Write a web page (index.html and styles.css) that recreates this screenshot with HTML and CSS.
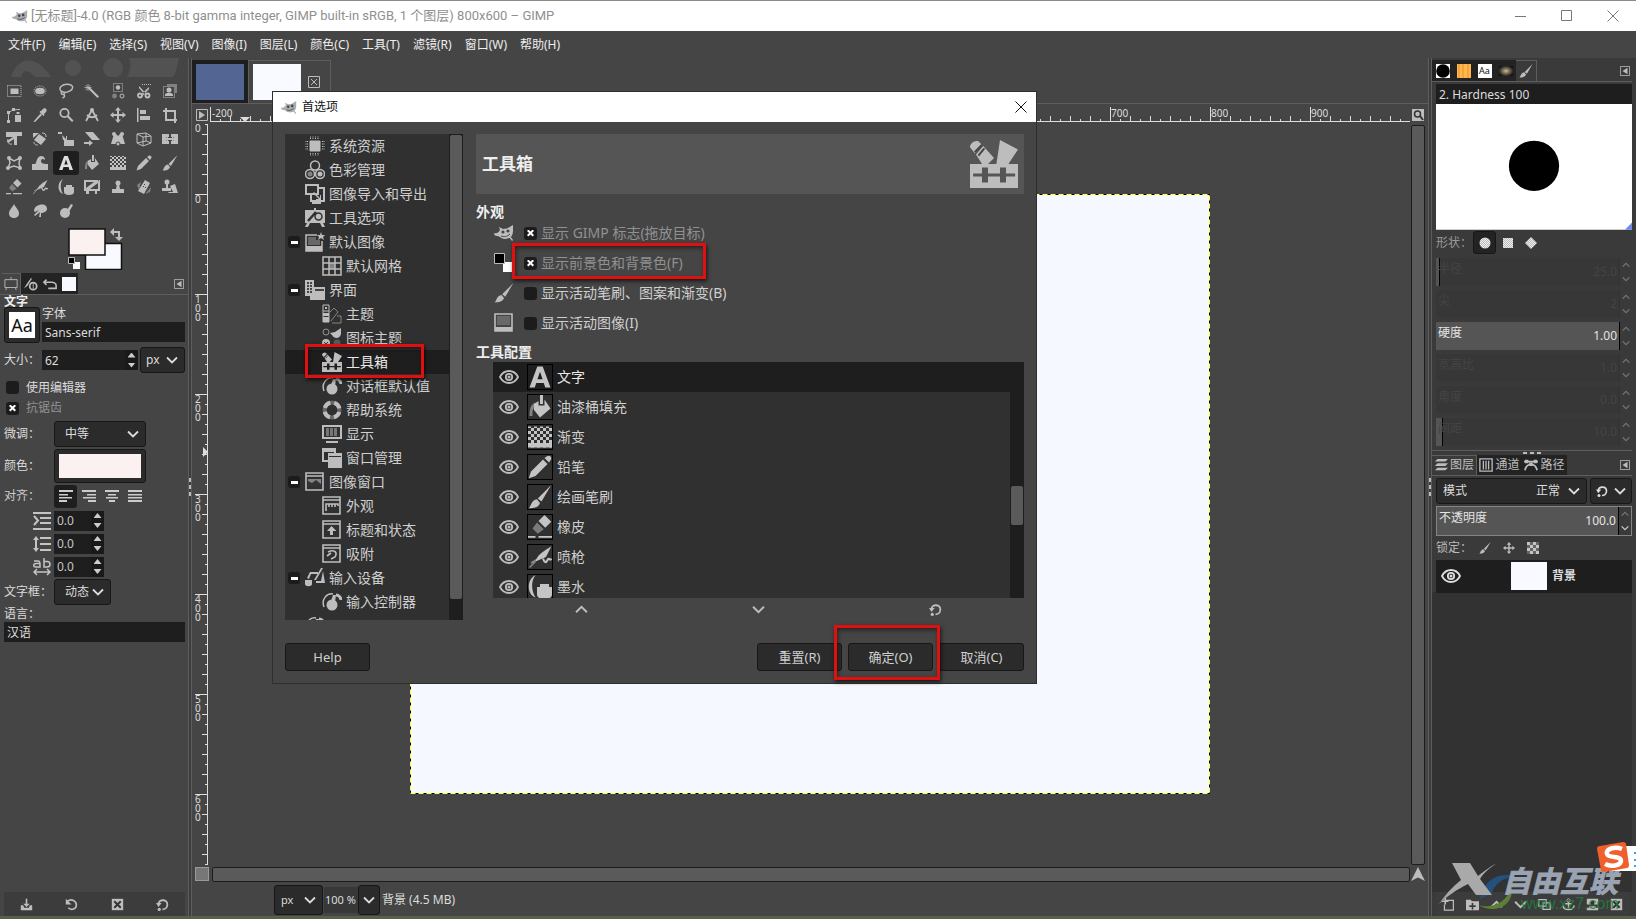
FILE: index.html
```html
<!DOCTYPE html>
<html lang="zh-CN">
<head>
<meta charset="utf-8">
<title>[无标题]-4.0 – GIMP</title>
<link rel="stylesheet" href="styles.css">
</head>
<body>
<svg class="defs" aria-hidden="true">
  <defs>
    <pattern id="check" width="4" height="4" patternUnits="userSpaceOnUse"><path d="M0 0h2v2H0zM2 2h2v2H2z" fill="#c4c4c4"/></pattern>
    <pattern id="fine" width="2" height="2" patternUnits="userSpaceOnUse"><path d="M0 0h2v2H0z" fill="#bbb"/><path d="M0 0h1v1H0zM1 1h1v1H1z" fill="#eee"/></pattern>
    <pattern id="hmid" x="0" width="20" height="16" patternUnits="userSpaceOnUse"><path d="M0 9h1v6H0zM10 12h1v3h-1z" fill="#ddd"/></pattern>
    <pattern id="hbig" x="0" width="100" height="16" patternUnits="userSpaceOnUse"><path d="M0 0h1v15H0z" fill="#ddd"/></pattern>
    <pattern id="vmid" y="12" width="16" height="20" patternUnits="userSpaceOnUse"><path d="M8 0h6v1H8zM11 10h3v1h-3z" fill="#ddd"/></pattern>
    <pattern id="vbig" y="72" width="16" height="100" patternUnits="userSpaceOnUse"><path d="M1 0h13v1H1z" fill="#ddd"/></pattern>
  </defs>
  <symbol id="rectsel" viewBox="0 0 16 16"><path d="M4.500 5.500h8v5.500h-8z"/><rect x="1.500" y="2.500" width="13.500" height="11" fill="none" stroke="currentColor" stroke-dasharray="1 1"/></symbol>
  <symbol id="ellsel" viewBox="0 0 16 16"><ellipse cx="8" cy="8" rx="4.800" ry="3.300"/><ellipse cx="8" cy="8" rx="6" ry="5" fill="none" stroke="currentColor" stroke-dasharray="1 1"/></symbol>
  <symbol id="lasso" viewBox="0 0 16 16"><path class="s" d="M4.500 9C2 8 1 5.500 3 3.500C6 .5 13 .5 14.500 3.500C15.500 7 10 9.500 5.500 9.500M5 8.500a2 1.500 0 1 0 .5 3c2-1 1-2.500-.5-2.500M6 11.500c1 1.500.5 3-1.500 3.500" stroke-width="1.400"/></symbol>
  <symbol id="wand" viewBox="0 0 16 16"><path d="M5.500 4l9.500 9.500-1.500 1.500L4 5.500z"/><path class="s" d="M4 1v7M.5 4.500h7M1.500 2l5 5M6.500 2l-5 5" stroke-width=".8"/></symbol>
  <symbol id="bycolor" viewBox="0 0 16 16"><rect x="3.500" y=".5" width="9" height="8" fill="none" stroke="currentColor" stroke-dasharray="1 1"/><circle cx="8" cy="4.500" r="2.200"/><circle cx="4.500" cy="13" r="2.400" opacity=".5"/><circle class="s" cx="12" cy="13" r="2"/></symbol>
  <symbol id="scissors" viewBox="0 0 16 16"><path d="M3 3l7.500 8-1.500 1L3 5zM13 4l-7.500 7 1.500 1.500L13 6z"/><circle class="s" cx="4" cy="12.500" r="2" stroke-width="1.800"/><circle class="s" cx="11.500" cy="12.500" r="2" stroke-width="1.800"/><path d="M6 1.500h9" stroke="currentColor" stroke-dasharray="1 1"/></symbol>
  <symbol id="fgsel" viewBox="0 0 16 16"><path d="M5 1h10v9h-2V3H5z" opacity=".5"/><rect x="1.500" y="3.500" width="11" height="11" fill="none" stroke="currentColor" stroke-dasharray="1 1"/><circle cx="7" cy="7" r="2.500"/><path d="M3 12c0-3 8-3 8 0v1H3z"/></symbol>
  <symbol id="paths" viewBox="0 0 16 16"><path class="s" d="M2.500 14V8C3 4 6 2.500 14 2.500"/><path d="M1 13h3v3H1zM1 4h3v3H1zM6 1h3v3H6zM9 8h6v7H9zM10.500 5h3v2h-3z"/></symbol>
  <symbol id="picker" viewBox="0 0 16 16"><path d="M9 4l2-2c2-2 5 1 3 3l-2 2 .5 1-1 1L7.500 5l1-1zM8.500 6.500L10 8l-7 7-1.500-.5z"/></symbol>
  <symbol id="zoom" viewBox="0 0 16 16"><circle class="s" cx="6.500" cy="6" r="4.200" stroke-width="1.800"/><path d="M9 10l1.500-1.500 5 5-1.500 1.500z"/></symbol>
  <symbol id="measure" viewBox="0 0 16 16"><path class="s" d="M8 3L2 14M8 3l6 11M3 8c3 3 7 3 10 0" stroke-width="1.800"/><circle cx="8" cy="3" r="2"/></symbol>
  <symbol id="move" viewBox="0 0 16 16"><path d="M8 0l3 3.500H9V7h3.500V5L16 8l-3.500 3V9H9v3.500h2L8 16l-3-3.500h2V9H3.500v2L0 8l3.500-3v2H7V3.500H5z"/></symbol>
  <symbol id="align" viewBox="0 0 16 16"><path d="M1 1h1.500v14H1zM4 3h6v4H4zM4 9h10v4H4z"/></symbol>
  <symbol id="crop" viewBox="0 0 16 16"><path d="M3 1h2v2h9v9h-2V5H5v7h10v2H3V5H1V3h2zM12 13h2v3h-2z"/></symbol>
  <symbol id="transform" viewBox="0 0 16 16"><path d="M0 1h16v4h-5v9H8V8L2 12 1 10l6-4H0z"/><path d="M2 8c-1 3 1 6 4 5" class="s"/></symbol>
  <symbol id="rotate" viewBox="0 0 16 16"><path d="M7 3l7 5-5 6-7-5zM1 2h6L1 7z"/><path class="s" d="M10 2c3 0 4 1 4 4M2 11c0 3 2 3 4 3"/></symbol>
  <symbol id="scale" viewBox="0 0 16 16"><path d="M6 9h10v6H6zM0 1h4v2H0zM4 4l4 4V5h1v4H5z"/></symbol>
  <symbol id="shear" viewBox="0 0 16 16"><path d="M1 1h8l7 8H8zM0 11h5V9l4 3-4 3v-2H0z"/></symbol>
  <symbol id="handle" viewBox="0 0 16 16"><path d="M1 13L4 3h2l2 2 2-2h2l3 10z"/><circle cx="4" cy="3" r="2"/><circle cx="12" cy="3" r="2"/><circle cx="8" cy="13" r="2" stroke="#454545"/></symbol>
  <symbol id="cube" viewBox="0 0 16 16"><path class="s" d="M1 3l9-1 5 3-8 1zM1 3v9l6 3V6M7 15l8-3V5M1 12l9-2V2M10 10l5 2"/></symbol>
  <symbol id="flip" viewBox="0 0 16 16"><path d="M0 3h7v3H4v4h3v3H0zM9 3h7v10H9v-3h3V6H9z"/><path d="M3 8l3-3v2h4V5l3 3-3 3V9H6v2z"/></symbol>
  <symbol id="cage" viewBox="0 0 16 16"><path class="s" d="M3 3l5 3 6-3-1 5 1 5-6-2-6 2 2-5z" stroke-width="1.500"/><circle cx="3" cy="3" r="2"/><circle cx="14" cy="3" r="2"/><circle cx="14" cy="13" r="2"/><circle cx="2" cy="13" r="2"/></symbol>
  <symbol id="warp" viewBox="0 0 16 16"><path d="M0 15V9h3c2-1 1-7 6-8 3 0 4 2 4 4-2-2-4-1-4 1 0 3 4 3 7 3v6z"/></symbol>
  <symbol id="text" viewBox="0 0 16 16"><path fill-rule="evenodd" d="M6.200 1h3.600L15 15h-3.500l-1-3h-5l-1 3H1zM8 4.500L6.300 9.500h3.400z"/></symbol>
  <symbol id="bucket" viewBox="0 0 16 16"><path d="M4 6l3-2v3h4V3l4 6-7 6-4-5z"/><path d="M8 0h2v6H8z"/><path d="M5 5C2 6 1 9 1 14h2c0-3 0-5 2-6z" opacity=".55"/></symbol>
  <symbol id="gradient" viewBox="0 0 16 16"><path d="M0 1h16v14H0z" fill="url(#check)"/><path d="M0 12h16v3H0z"/></symbol>
  <symbol id="pencil" viewBox="0 0 16 16"><path d="M12.500 1c2-1.500 4 1 2.500 2.500L14 5l-3-3zM10 3l3 3-8 8-4.500 1.500L2 11z"/></symbol>
  <symbol id="brush" viewBox="0 0 16 16"><path d="M15.500 0L9 11 6.500 9zM6 9.500L8 12c-1 3-4 3.500-7.500 3.500 1.500-1 1.500-5.500 5.500-6z"/></symbol>
  <symbol id="eraser" viewBox="0 0 16 16"><path d="M7 4l4-4 4.500 4.500-4 4z"/><path d="M3 9l3-4 4.500 4.500-4 3z" opacity=".5"/><path d="M0 14h5v1.200H0zM7 14h9v1.200H7z"/></symbol>
  <symbol id="airbrush" viewBox="0 0 16 16"><path d="M15.500 1L12 8l-7 3c1-4 5-7 10.500-10z"/><path class="s" d="M10 9c1 3 2 3 3 1s2 1 2.500-1" stroke-width="1.400"/><path class="s" d="M5 11l-4 4M7 9l-5 3" opacity=".6"/></symbol>
  <symbol id="ink" viewBox="0 0 16 16"><path d="M5 0C2 4 2 10 5 15c-6-2-6-12 0-15z"/><path d="M8 6h6v2h2v5c0 2-2 3-5 3s-5-1-5-3V8h2z"/></symbol>
  <symbol id="mypaint" viewBox="0 0 16 16"><path fill-rule="evenodd" d="M0 1h14v2l1-2h1v11h-3v3h-2v-3H5v3H2v-3H0zM2 9l8-6H2zM6 10h8V4z"/></symbol>
  <symbol id="stamp" viewBox="0 0 16 16"><circle cx="8" cy="4" r="2.500"/><path d="M7 5h2l1 5h4v4H2v-4h4z"/></symbol>
  <symbol id="heal" viewBox="0 0 16 16"><path d="M9 1l5 3-6 11-6-3z"/><path d="M1 6l4-3-2 8zM15 8l-1 5-5 2z" opacity=".5"/><path d="M7 7h1v1H7zM9 8h1v1H9zM8 5h1v1H8z" fill="#454545"/></symbol>
  <symbol id="pclone" viewBox="0 0 16 16"><circle cx="5" cy="3" r="2.500"/><path d="M4 4h2v5h3v3H0V9h4zM8 7l5-2 3 9H6l1-1h4z"/></symbol>
  <symbol id="drop" viewBox="0 0 16 16"><path d="M8 1c2 4 5 6 5 9.500 0 6-10 6-10 0C3 7 6 5 8 1z"/></symbol>
  <symbol id="smudge" viewBox="0 0 16 16"><path d="M2 8c0-6 9-8 12-5 3 4-1 7-5 7v4H7l1-5-5 4-1-1 5-5-4 2z"/></symbol>
  <symbol id="dodge" viewBox="0 0 16 16"><circle cx="7" cy="10" r="5"/><path d="M9 7l4-6 2 1-4 7z"/></symbol>
  <symbol id="wilber" viewBox="0 0 20 16"><path d="M0 8c3 1 5-1 6-3L5 2l4 2 4-.5L19 0v6c0 5-3 8-8 8-4 0-5-3-8-3-2 0-3-1-3-3z"/><path d="M15 12l3 4 1-1-3-4z"/><circle cx="9" cy="7" r="1.600" fill="#454545"/><circle cx="14" cy="6" r="1.600" fill="#454545"/><path d="M7 11c3 1 6 1 9-2" fill="none" stroke="#454545"/></symbol>
  <symbol id="easel" viewBox="0 0 16 16"><path class="s" d="M1 3h14v9H1zM8 0v3M3 12l-1 3M13 12l1 3"/></symbol>
  <symbol id="device" viewBox="0 0 16 16"><path d="M8 1L3 8l-3 5 4-3 5-8z"/><circle class="s" cx="10.500" cy="10.500" r="4" stroke-width="2"/><path d="M10 7h1v7h-1z"/></symbol>
  <symbol id="undo" viewBox="0 0 16 16"><path class="s" d="M4 3L1 6l3 3M1 6h9c5 0 5 4 5 4v3H6" stroke-width="1.800"/></symbol>
  <symbol id="collapse" viewBox="0 0 12 12"><path class="s" d="M.5.5h11v11H.5z"/><path d="M9 2v8L3 6z"/></symbol>
  <symbol id="closex" viewBox="0 0 12 12"><path class="s" d="M.5.5h11v11H.5zM3 3l6 6M9 3L3 9"/></symbol>
  <symbol id="down" viewBox="0 0 12 12"><path class="s" d="M1 3.500L6 8.500l5-5" stroke-width="1.800"/></symbol>
  <symbol id="up" viewBox="0 0 12 12"><path class="s" d="M1 8.500L6 3.500l5 5" stroke-width="1.800"/></symbol>
  <symbol id="al" viewBox="0 0 14 12"><path d="M0 0h14v2H0zM0 4h9v1.600H0zM0 7h13v1.600H0zM0 10h8v2H0z"/></symbol>
  <symbol id="ar" viewBox="0 0 14 12"><path d="M0 0h14v2H0zM5 4h9v1.600H5zM1 7h13v1.600H1zM6 10h8v2H6z"/></symbol>
  <symbol id="ac" viewBox="0 0 14 12"><path d="M0 0h14v2H0zM3 4h8v1.600H3zM1 7h12v1.600H1zM4 10h6v2H4z"/></symbol>
  <symbol id="aj" viewBox="0 0 14 12"><path d="M0 0h14v2H0zM0 4h14v1.600H0zM0 7h14v1.600H0zM0 10h14v2H0z"/></symbol>
  <symbol id="indent" viewBox="0 0 18 18"><path d="M0 0h18v2H0zM7 5h11v2H7zM7 10h11v2H7zM0 16h18v2H0z"/><path class="s" d="M1 4l4 4.500L1 13" stroke-width="2"/></symbol>
  <symbol id="linesp" viewBox="0 0 18 18"><path d="M7 2h11v2H7zM7 8h11v2H7zM7 14h11v2H7zM3 1l3 4H4v8h2l-3 4-3-4h2V5H0z"/></symbol>
  <symbol id="letsp" viewBox="0 0 18 18"><path class="s" d="M1 3h4c2 0 2 1 2 6H3C0 9 0 5.500 3 5.500h4M11 0v9h3c4 0 4-5.500 0-5.500h-3M4 11l-3 3 3 3M14 11l3 3-3 3M1 14h16" stroke-width="1.500"/></symbol>
  <symbol id="save" viewBox="0 0 16 16"><path d="M7 1h2v6h3l-4 4-4-4h3zM1 9h3l1 3h6l1-3h3v6H1z"/></symbol>
  <symbol id="revert" viewBox="0 0 16 16"><path class="s" d="M3 4c5-4 11 0 11 4.500S8 16 4 12" stroke-width="2"/><path d="M1 1v7h7z"/></symbol>
  <symbol id="delete" viewBox="0 0 16 16"><path d="M1 1h14v14H1z"/><path d="M4 4l8 8M12 4l-8 8" stroke="#333" stroke-width="2.500"/></symbol>
  <symbol id="reset" viewBox="0 0 16 16"><path class="s" d="M3 8C3 1 14 1 14 8c0 4-3 6-6 6" stroke-width="2.200"/><path d="M0 6h7l-4 5z"/><circle cx="4" cy="14" r="2"/></symbol>
  <symbol id="layers" viewBox="0 0 16 16"><path d="M4 1h12l-3 3H1zM4 6h12l-3 3H1zM4 11h12l-3 3H1z"/></symbol>
  <symbol id="channels" viewBox="0 0 16 16"><path class="s" d="M1 1h14v14H1zM5 3v10M8 3v10M11 3v10" stroke-width="1.500"/></symbol>
  <symbol id="pathtab" viewBox="0 0 16 16"><path class="s" d="M0 4h16M1 14c2-9 12-9 14 0" stroke-width="2"/><path d="M1 2h4v4H1zM11 2h4v4h-4zM6 5h4v4H6z"/></symbol>
  <symbol id="eye" viewBox="0 0 20 16"><path class="s" d="M1 8c4-8 14-8 18 0-4 8-14 8-18 0z" stroke-width="1.800"/><circle class="s" cx="10" cy="8" r="3.200" stroke-width="1.800"/><circle cx="10" cy="8" r="1.500"/></symbol>
  <symbol id="newdoc" viewBox="0 0 16 16"><path class="s" d="M5 3h9v12H3V8" stroke-width="1.500"/><path d="M3 0v3H0v2h3v3h2V5h3V3H5V0z"/></symbol>
  <symbol id="group" viewBox="0 0 16 16"><path fill-rule="evenodd" d="M0 2h6l1 2h9v11H0zM7 6v3H4v2h3v3h2v-3h3V9H9V6z"/></symbol>
  <symbol id="dup" viewBox="0 0 16 16"><path class="s" d="M1 2h9v8H1zM6 6h9v8H6z" stroke-width="1.500"/></symbol>
  <symbol id="anchor" viewBox="0 0 16 16"><path class="s" d="M8 5v10M4 7h8M1 9c1 7 13 7 14 0" stroke-width="1.700"/><circle class="s" cx="8" cy="3" r="2"/></symbol>
  <symbol id="mask" viewBox="0 0 16 16"><path d="M1 1h14v7H1zM4 10h8v2h3v3H1v-3h3z"/><circle cx="8" cy="6" r="2.500" fill="#333"/></symbol>
  <symbol id="chip" viewBox="0 0 20 20"><rect x="4.500" y="4.500" width="11" height="11" rx="1"/><path d="M5 1h10M5 2.500h10M5 17.500h10M5 19h10M1 5v10M2.500 5v10M17.500 5v10M19 5v10" stroke="currentColor" stroke-dasharray="1 1.500"/></symbol>
  <symbol id="color3" viewBox="0 0 20 20"><g class="s" stroke-width="1.500"><circle cx="10" cy="5.500" r="4.500"/><circle cx="5" cy="14" r="4.500"/><circle cx="15" cy="14" r="4.500"/></g><circle cx="5" cy="14" r="2.500" opacity=".6"/><circle cx="15" cy="14" r="2.500"/></symbol>
  <symbol id="io" viewBox="0 0 20 20"><path class="s" d="M1 1h12v9H1zM6 10v7h13V4h-6M7 19h9" stroke-width="2"/><path d="M9 8l6 6v-3h1v5h-5v-1h3L8 9z"/></symbol>
  <symbol id="toolopt" viewBox="0 0 20 20"><path d="M0 2h20v13h-2l2 4h-3l-2-4H5l-2 4H0l2-4H0z"/><path d="M9 0h2v2H9z"/><path d="M3 13L11 4" stroke="#303030" stroke-width="2.500"/><circle cx="13.500" cy="8.500" r="3.500" fill="none" stroke="#303030" stroke-width="1.500"/></symbol>
  <symbol id="defimg" viewBox="0 0 20 20"><path class="s" d="M12 3H1v16h16V9" stroke-width="1.500"/><path d="M1 14h16v5H1zM16 0l1 3h3l-2 2 1 3-3-2-3 2 1-3-2-2h3z"/><path d="M3 5h8v3h4v5H3z" opacity=".4"/></symbol>
  <symbol id="grid" viewBox="0 0 20 20"><path class="s" d="M1 1h18v18H1zM7 1v18M13 1v18M1 7h18M1 13h18" stroke-width="1.500"/><path d="M7 7h6v6H7z" opacity=".6"/></symbol>
  <symbol id="iface" viewBox="0 0 20 20"><path d="M5 7h15v13H5z"/><path d="M0 0h9v16H0z"/><path d="M2 2h2v2H2zM5 2h2v2H5zM2 5h2v2H2zM5 5h2v2H5zM2 8h2v2H2zM5 8h2v2H5zM2 11h2v2H2zM5 11h2v2H5zM10 9h9v2h-9z" fill="#444"/></symbol>
  <symbol id="theme" viewBox="0 0 20 20"><path class="s" d="M1 1h6v17H1zM1 7h6"/><path class="s" d="M8 8l4-4 4 4-7 9M10 19h9v-7h-4" opacity=".6"/><path d="M3 3h2v2H3zM1 9h6v3H1zM1 13h6v5H1z"/></symbol>
  <symbol id="icontheme" viewBox="0 0 20 20"><circle class="s" cx="4" cy="4" r="3" opacity=".7"/><path d="M8 5l5-1 6-4v6c-1 5-7 5-9 1z"/><circle cx="4" cy="15" r="4"/><path d="M2 14l2 2 2-2" stroke="#333" fill="none"/><circle cx="15" cy="15" r="3.500" opacity=".3"/></symbol>
  <symbol id="toolbox" viewBox="0 0 20 20"><path fill-rule="evenodd" d="M0 10h20v10H0zM1.300 14v1.200H5v2.500h2.500v-2.500h5v2.500H15v-2.500h3.800V14H15v-2.500h-2.500V14h-5v-2.500H5V14z"/><path d="M12.500 0l7.500 4-4 6h-5zM0 3C0 1 3-.5 4 1l1 1-3 3.500zM5.500 2.500L10 7.500 7.500 10H5L2.500 6z"/><path d="M2 5l3-3M3.500 6.500l2.500-3" stroke="#444" stroke-width=".8"/></symbol>
  <symbol id="knob" viewBox="0 0 20 20"><circle cx="10" cy="13" r="5.500"/><path d="M9 9l2-6h3l-1 7z"/><path class="s" d="M2 15C-1 7 5 1 11 2" stroke-width="1.500"/><path class="s" d="M14 3c3 0 5 3 5 5" stroke-width="3"/></symbol>
  <symbol id="ring" viewBox="0 0 20 20"><circle class="s" cx="10" cy="10" r="7.500" stroke-width="4" stroke-opacity=".4"/><circle class="s" cx="10" cy="10" r="7.500" stroke-width="4" stroke-dasharray="7.800 4" stroke-dashoffset="-2"/></symbol>
  <symbol id="display" viewBox="0 0 20 20"><path class="s" d="M1 2h18v12H1zM4 18h12" stroke-width="2"/><path d="M4 4h3v8H4zM8 4h3v8H8zM12 4h3v8h-3z" opacity=".5"/></symbol>
  <symbol id="winman" viewBox="0 0 20 20"><path fill-rule="evenodd" d="M0 0h14v5h6v15H6v-6H0zM2 4v8h4V5h6V4zM7 8v1h12V8z"/></symbol>
  <symbol id="imgwin" viewBox="0 0 20 20"><path class="s" d="M1 1h17v17H1zM1 4h17" stroke-width="1.600"/><path d="M3 7h13v7H3z" opacity=".6"/><path d="M3 9l4 2 4-3 5 4v3H3z" fill="#333"/></symbol>
  <symbol id="winrule" viewBox="0 0 20 20"><path class="s" d="M1 1h17v17H1zM1 4h17M4 15V8h12v2M7 8v3M10 8v3M13 8v3" stroke-width="1.600"/></symbol>
  <symbol id="winup" viewBox="0 0 20 20"><path class="s" d="M1 1h17v17H1zM1 4h17" stroke-width="1.600"/><path d="M9.500 6l5 5H11v4H8v-4H5z"/></symbol>
  <symbol id="winsnap" viewBox="0 0 20 20"><path class="s" d="M1 1h17v17H1zM1 4h17M6 8c6-3 10 0 7 5l-4 2M5 12l4-3" stroke-width="1.600"/></symbol>
  <symbol id="input" viewBox="0 0 20 20"><path d="M0 12h7v4c0 3-7 3-7 0zM2 10l3-6h8v2H6l-2 5zM16 0h2l-7 12H9zM18 3l2 12h-9v-2h5z"/></symbol>
  <symbol id="actimg" viewBox="0 0 20 20"><path class="s" d="M1 1h17v17H1z" stroke-width="1.600"/><path d="M1 14h17v4H1z"/><path d="M3 3h13v9H3z" opacity=".3"/></symbol>
</svg>

<header class="titlebar">
  <svg class="wil"><use href="#wilber"/></svg>
  <h1>[无标题]-4.0 (RGB 颜色 8-bit gamma integer, GIMP built-in sRGB, 1 个图层) 800x600 – GIMP</h1>
  <div class="winbtns">
    <button aria-label="最小化"><svg viewBox="0 0 12 12"><path class="s" d="M0 6.500h11"/></svg></button>
    <button aria-label="最大化"><svg viewBox="0 0 12 12"><path class="s" d="M.5.5h10v10H.5z"/></svg></button>
    <button aria-label="关闭"><svg viewBox="0 0 12 12"><path class="s" d="M.5.5l11 11M11.500.5L.5 11.500"/></svg></button>
  </div>
</header>
<nav class="menubar">
  <button>文件(F)</button><button>编辑(E)</button><button>选择(S)</button><button>视图(V)</button><button>图像(I)</button><button>图层(L)</button><button>颜色(C)</button><button>工具(T)</button><button>滤镜(R)</button><button>窗口(W)</button><button>帮助(H)</button>
</nav>

<main class="work">
  <aside class="left">
    <svg class="band" viewBox="0 0 176 19" aria-hidden="true"><path d="M8 19C14-2 34-4 48 19H32c-6-8-12-8-14 0zM126 0h50c-2 10-3 14-6 19h-46c4-8 4-12 2-19z"/><circle cx="70" cy="10" r="8"/><circle cx="110" cy="10" r="10"/></svg>
    <div class="tools">
      <button aria-label="矩形选择"><svg><use href="#rectsel"/></svg></button><button aria-label="椭圆选择"><svg><use href="#ellsel"/></svg></button><button aria-label="自由选择"><svg><use href="#lasso"/></svg></button><button aria-label="模糊选择"><svg><use href="#wand"/></svg></button><button aria-label="按颜色选择"><svg><use href="#bycolor"/></svg></button><button aria-label="剪刀选择"><svg><use href="#scissors"/></svg></button><button aria-label="前景选择"><svg><use href="#fgsel"/></svg></button>
      <button aria-label="路径"><svg><use href="#paths"/></svg></button><button aria-label="颜色拾取"><svg><use href="#picker"/></svg></button><button aria-label="缩放"><svg><use href="#zoom"/></svg></button><button aria-label="测量"><svg><use href="#measure"/></svg></button><button aria-label="移动"><svg><use href="#move"/></svg></button><button aria-label="对齐"><svg><use href="#align"/></svg></button><button aria-label="剪裁"><svg><use href="#crop"/></svg></button>
      <button aria-label="统一变换"><svg><use href="#transform"/></svg></button><button aria-label="旋转"><svg><use href="#rotate"/></svg></button><button aria-label="缩放变换"><svg><use href="#scale"/></svg></button><button aria-label="切变"><svg><use href="#shear"/></svg></button><button aria-label="控制柄变换"><svg><use href="#handle"/></svg></button><button aria-label="透视"><svg><use href="#cube"/></svg></button><button aria-label="翻转"><svg><use href="#flip"/></svg></button>
      <button aria-label="笼状变换"><svg><use href="#cage"/></svg></button><button aria-label="弯曲变换"><svg><use href="#warp"/></svg></button><button class="on" aria-label="文字"><svg><use href="#text"/></svg></button><button aria-label="油漆桶填充"><svg><use href="#bucket"/></svg></button><button aria-label="渐变"><svg><use href="#gradient"/></svg></button><button aria-label="铅笔"><svg><use href="#pencil"/></svg></button><button aria-label="绘画笔刷"><svg><use href="#brush"/></svg></button>
      <button aria-label="橡皮"><svg><use href="#eraser"/></svg></button><button aria-label="喷枪"><svg><use href="#airbrush"/></svg></button><button aria-label="墨水"><svg><use href="#ink"/></svg></button><button aria-label="MyPaint"><svg><use href="#mypaint"/></svg></button><button aria-label="克隆"><svg><use href="#stamp"/></svg></button><button aria-label="修复"><svg><use href="#heal"/></svg></button><button aria-label="透视克隆"><svg><use href="#pclone"/></svg></button>
      <button aria-label="模糊/锐化"><svg><use href="#drop"/></svg></button><button aria-label="涂抹"><svg><use href="#smudge"/></svg></button><button aria-label="减淡/加深"><svg><use href="#dodge"/></svg></button>
    </div>
    <div class="swatches">
      <svg viewBox="0 0 56 42" width="56" height="42" role="img" aria-label="前景色和背景色"><path d="M17.500 15.500h36v26h-36z" fill="#f8faff" stroke="#111" stroke-width="1.500"/><path d="M1 1h36v26H1z" fill="#fbf1f1" stroke="#111" stroke-width="1.500"/><path d="M5 34h7v7H5z" fill="#fff"/><path d="M.5 29.500h6v6h-6z" fill="#000" stroke="#bbb"/><g fill="#bdbdbd"><path d="M42 4l4-4v3h6v6h3l-4 4-4-4h3V5h-4v3z"/></g></svg>
    </div>
    <div class="dtabs">
      <button class="on" aria-label="工具选项"><svg><use href="#easel"/></svg></button><button aria-label="设备状态"><svg><use href="#device"/></svg></button><button aria-label="撤消历史"><svg><use href="#undo"/></svg></button><button aria-label="图像"><i class="whitebox"></i></button>
      <button class="coll" aria-label="配置此标签页"><svg><use href="#collapse"/></svg></button>
    </div>
    <section class="opts">
      <h2>文字</h2>
      <div class="fontrow">
        <button class="aa" aria-label="选择字体"><span>Aa</span></button>
        <div class="fontcol"><label for="font">字体</label><input id="font" value="Sans-serif"></div>
      </div>
      <div class="row sizerow"><label for="size">大小：</label><span class="spin"><input id="size" value="62"><span class="arrows"><button aria-label="增加"></button><button aria-label="减少"></button></span></span>
        <span class="sel"><select aria-label="单位"><option>px</option></select><svg><use href="#down"/></svg></span></div>
      <label class="chk"><input type="checkbox">使用编辑器</label>
      <label class="chk dim"><input type="checkbox" checked>抗锯齿</label>
      <div class="row hintrow"><label for="hint">微调：</label><span class="sel w92"><select id="hint"><option>中等</option></select><svg><use href="#down"/></svg></span></div>
      <div class="row colrow"><span class="lab">颜色：</span><button class="colorbtn" aria-label="颜色"><i></i></button></div>
      <div class="row alrow"><span class="lab">对齐：</span><button class="on" aria-label="左对齐"><svg><use href="#al"/></svg></button><button aria-label="右对齐"><svg><use href="#ar"/></svg></button><button aria-label="居中"><svg><use href="#ac"/></svg></button><button aria-label="两端对齐"><svg><use href="#aj"/></svg></button></div>
      <div class="row sprow"><svg><use href="#indent"/></svg><span class="spin"><input aria-label="缩进" value="0.0"><span class="arrows"><button aria-label="增加"></button><button aria-label="减少"></button></span></span></div>
      <div class="row sprow"><svg><use href="#linesp"/></svg><span class="spin"><input aria-label="行距" value="0.0"><span class="arrows"><button aria-label="增加"></button><button aria-label="减少"></button></span></span></div>
      <div class="row sprow"><svg><use href="#letsp"/></svg><span class="spin"><input aria-label="字距" value="0.0"><span class="arrows"><button aria-label="增加"></button><button aria-label="减少"></button></span></span></div>
      <div class="row boxrow"><label for="box">文字框：</label><span class="sel w57"><select id="box"><option>动态</option></select><svg><use href="#down"/></svg></span></div>
      <label class="langlab" for="lang">语言：</label>
      <input id="lang" value="汉语">
    </section>
    <div class="foot">
      <button aria-label="保存"><svg><use href="#save"/></svg></button><button aria-label="恢复"><svg><use href="#revert"/></svg></button><button aria-label="删除"><svg><use href="#delete"/></svg></button><button aria-label="重置"><svg><use href="#reset"/></svg></button>
    </div>
  </aside>
  <div class="gutter"><i></i></div>

  <section class="center">
    <div class="imgtabs">
      <button class="it" aria-label="图像 1"><i class="blue"></i></button>
      <div class="it on"><i></i><button aria-label="关闭图像"><svg><use href="#closex"/></svg></button></div>
    </div>
    <div class="view">
      <button class="corner" aria-label="图像菜单"><svg viewBox="0 0 12 12"><path class="s" d="M.5.5h11v11H.5z"/><path d="M3 2v8l6-4z"/></svg></button>
      <svg class="hr"><rect width="100%" height="16" fill="url(#hmid)"/><rect width="100%" height="16" fill="url(#hbig)"/><path d="M0 14.500h3000" stroke="#ddd"/><path d="M30 10h10l-5 5z" fill="#ddd"/>
        <text x="2" y="10">-200</text><text x="901" y="10">700</text><text x="1001" y="10">800</text><text x="1101" y="10">900</text></svg>
      <button class="corner" aria-label="缩放窗口"><svg viewBox="0 0 12 12"><path d="M0 0h12v12H0z"/><circle cx="5.500" cy="5" r="3" fill="none" stroke="#333" stroke-width="1.500"/><path d="M8 7l3 4" stroke="#333" stroke-width="2"/></svg></button>
      <svg class="vr"><rect width="16" height="100%" fill="url(#vmid)"/><rect width="16" height="100%" fill="url(#vbig)"/><path d="M13.500 2v3000" stroke="#ddd"/><path d="M9 325v10l5-5z" fill="#ddd"/>
        <text x="1" y="10">0</text><text x="1" y="81">0</text>
        <text y="181"><tspan x="1">1</tspan><tspan x="1" dy="9">0</tspan><tspan x="1" dy="9">0</tspan></text>
        <text y="281"><tspan x="1">2</tspan><tspan x="1" dy="9">0</tspan><tspan x="1" dy="9">0</tspan></text>
        <text y="381"><tspan x="1">3</tspan><tspan x="1" dy="9">0</tspan><tspan x="1" dy="9">0</tspan></text>
        <text y="481"><tspan x="1">4</tspan><tspan x="1" dy="9">0</tspan><tspan x="1" dy="9">0</tspan></text>
        <text y="581"><tspan x="1">5</tspan><tspan x="1" dy="9">0</tspan><tspan x="1" dy="9">0</tspan></text>
        <text y="681"><tspan x="1">6</tspan><tspan x="1" dy="9">0</tspan><tspan x="1" dy="9">0</tspan></text></svg>
      <div class="canvas"><svg class="sheet" viewBox="0 0 800 600"><path d="M.5.5h799v599H.5z" fill="#f5f8ff" stroke="#000"/><path d="M.5.5h799v599H.5z" fill="none" stroke="#ffff60" stroke-width="1.500" stroke-dasharray="5 3"/></svg></div>
      <div class="vbar"></div>
      <button class="corner qm" aria-label="快速蒙版"></button>
      <div class="hbar"></div>
      <button class="corner nav" aria-label="导航"><svg viewBox="0 0 12 12"><path d="M6 0l6 12-6-3-6 3z"/></svg></button>
    </div>
    <footer class="status">
      <span class="sel unit"><select aria-label="单位"><option>px</option></select><svg><use href="#down"/></svg></span><input class="zoomv" aria-label="缩放比例" value="100 %"><button class="zoomb" aria-label="缩放列表"><svg><use href="#down"/></svg></button><span>背景 (4.5 MB)</span>
    </footer>
  </section>
  <div class="gutter g2"><i></i></div>

  <aside class="right">
    <div class="dtabs">
      <button aria-label="笔刷"><svg viewBox="0 0 14 14"><path d="M0 0h14v14H0z" fill="#fff"/><circle cx="7" cy="7" r="6.800" fill="#000"/></svg></button><button aria-label="图案"><svg viewBox="0 0 14 14"><path d="M0 0h14v14H0z" fill="#ffb84d"/><path d="M2 0v14M6 0v14M11 0v14" stroke="#e58f26"/></svg></button><button aria-label="字体"><span class="miniaa">Aa</span></button><button aria-label="渐变"><i class="glow"></i></button><button class="on" aria-label="笔刷编辑器"><svg><use href="#brush"/></svg></button>
      <button class="coll" aria-label="配置此标签页"><svg><use href="#collapse"/></svg></button>
    </div>
    <section class="brushed">
      <input class="bname" aria-label="笔刷名称" value="2. Hardness 100">
      <svg class="preview" viewBox="0 0 195 125" role="img" aria-label="笔刷预览"><path d="M0 0h195v125H0z" fill="#fff"/><circle cx="97.500" cy="61.500" r="25" fill="#000"/><path d="M195 118v7h-7z" fill="#6b8ae6"/></svg>
      <div class="shape"><span>形状：</span><button class="on" aria-label="圆形"><svg viewBox="0 0 12 12"><circle cx="6" cy="6" r="5.500" fill="url(#fine)"/></svg></button><button aria-label="方形"><svg viewBox="0 0 12 12"><path d="M1 1h10v10H1z" fill="url(#fine)"/></svg></button><button aria-label="菱形"><svg viewBox="0 0 12 12"><path d="M6 0l6 6-6 6-6-6z" fill="url(#fine)"/></svg></button></div>
      <div class="slider off k3"><div><span>半径</span><b>25.0</b></div><span class="ud"><button aria-label="增加"><svg><use href="#up"/></svg></button><button aria-label="减少"><svg><use href="#down"/></svg></button></span></div>
      <div class="slider off"><div><span>尖</span><b>2</b></div><span class="ud"><button aria-label="增加"><svg><use href="#up"/></svg></button><button aria-label="减少"><svg><use href="#down"/></svg></button></span></div>
      <div class="slider full"><div><span>硬度</span><b>1.00</b></div><span class="ud"><button aria-label="增加"><svg><use href="#up"/></svg></button><button aria-label="减少"><svg><use href="#down"/></svg></button></span></div>
      <div class="slider off"><div><span>宽高比</span><b>1.0</b></div><span class="ud"><button aria-label="增加"><svg><use href="#up"/></svg></button><button aria-label="减少"><svg><use href="#down"/></svg></button></span></div>
      <div class="slider off"><div><span>角度</span><b>0.0</b></div><span class="ud"><button aria-label="增加"><svg><use href="#up"/></svg></button><button aria-label="减少"><svg><use href="#down"/></svg></button></span></div>
      <div class="slider off k6"><div><span>间距</span><b>10.0</b></div><span class="ud"><button aria-label="增加"><svg><use href="#up"/></svg></button><button aria-label="减少"><svg><use href="#down"/></svg></button></span></div>
    </section>
    <div class="hsplit"><i></i></div>
    <div class="dtabs lt">
      <button class="on"><svg><use href="#layers"/></svg>图层</button><button><svg><use href="#channels"/></svg>通道</button><button><svg><use href="#pathtab"/></svg>路径</button>
      <button class="coll" aria-label="配置此标签页"><svg><use href="#collapse"/></svg></button>
    </div>
    <section class="layers">
      <div class="moderow"><label class="mode">模式<span class="sel bare"><select><option>正常</option></select><svg><use href="#down"/></svg></span></label><button class="mode2" aria-label="切换模式组"><svg><use href="#reset"/></svg><svg><use href="#down"/></svg></button></div>
      <div class="slider full opac"><div><span>不透明度</span><b>100.0</b></div><span class="ud"><button aria-label="增加"><svg><use href="#up"/></svg></button><button class="lit" aria-label="减少"><svg><use href="#down"/></svg></button></span></div>
      <div class="lock"><span>锁定：</span><button aria-label="锁定像素"><svg><use href="#brush"/></svg></button><button aria-label="锁定位置"><svg><use href="#move"/></svg></button><button aria-label="锁定透明"><svg viewBox="0 0 12 12"><path d="M0 0h12v12H0z" fill="#666"/><path d="M0 0h3v3H0zM6 0h3v3H6zM3 3h3v3H3zM9 3h3v3H9zM0 6h3v3H0zM6 6h3v3H6zM3 9h3v3H3zM9 9h3v3H9z" fill="#c4c4c4"/></svg></button></div>
      <div class="layer"><button aria-label="可见"><svg><use href="#eye"/></svg></button><i></i><strong>背景</strong></div>
    </section>
    <div class="foot">
      <button aria-label="新建图层"><svg><use href="#newdoc"/></svg></button><button aria-label="新建图层组"><svg><use href="#group"/></svg></button><button aria-label="上移"><svg><use href="#up"/></svg></button><button aria-label="下移"><svg><use href="#down"/></svg></button><button aria-label="复制"><svg><use href="#dup"/></svg></button><button aria-label="固定"><svg><use href="#anchor"/></svg></button><button aria-label="蒙版"><svg><use href="#mask"/></svg></button><button aria-label="删除图层"><svg><use href="#delete"/></svg></button>
    </div>
  </aside>
</main>

<section class="dialog" role="dialog" aria-labelledby="dt">
  <header><svg class="wil"><use href="#wilber"/></svg><h2 id="dt">首选项</h2><button aria-label="关闭"><svg viewBox="0 0 12 12"><path class="s" d="M.5.5l11 11M11.500.5L.5 11.500"/></svg></button></header>
  <div class="dbody">
    <div class="tree">
      <ul>
        <li><svg><use href="#chip"/></svg>系统资源</li>
        <li><svg><use href="#color3"/></svg>色彩管理</li>
        <li><svg><use href="#io"/></svg>图像导入和导出</li>
        <li><svg><use href="#toolopt"/></svg>工具选项</li>
        <li class="open"><button aria-label="折叠"></button><svg><use href="#defimg"/></svg>默认图像</li>
        <li class="sub"><svg><use href="#grid"/></svg>默认网格</li>
        <li class="open"><button aria-label="折叠"></button><svg><use href="#iface"/></svg>界面</li>
        <li class="sub"><svg><use href="#theme"/></svg>主题</li>
        <li class="sub"><svg><use href="#icontheme"/></svg>图标主题</li>
        <li class="sub on"><svg><use href="#toolbox"/></svg>工具箱<i class="mark m1"></i></li>
        <li class="sub"><svg><use href="#knob"/></svg>对话框默认值</li>
        <li class="sub"><svg><use href="#ring"/></svg>帮助系统</li>
        <li class="sub"><svg><use href="#display"/></svg>显示</li>
        <li class="sub"><svg><use href="#winman"/></svg>窗口管理</li>
        <li class="open"><button aria-label="折叠"></button><svg><use href="#imgwin"/></svg>图像窗口</li>
        <li class="sub"><svg><use href="#winrule"/></svg>外观</li>
        <li class="sub"><svg><use href="#winup"/></svg>标题和状态</li>
        <li class="sub"><svg><use href="#winsnap"/></svg>吸附</li>
        <li class="open"><button aria-label="折叠"></button><svg><use href="#input"/></svg>输入设备</li>
        <li class="sub"><svg><use href="#knob"/></svg>输入控制器</li>
        <li><svg><use href="#knob"/></svg></li>
      </ul>
      <div class="sb"><i></i></div>
    </div>
    <div class="page">
      <div class="banner"><h3>工具箱</h3><svg><use href="#toolbox"/></svg></div>
      <h4>外观</h4>
      <div class="prow"><svg><use href="#wilber"/></svg><label class="dim"><input type="checkbox" checked>显示 GIMP 标志(拖放目标)</label></div>
      <div class="prow"><svg viewBox="0 0 20 20"><path d="M9 9h10v10H9z" fill="#fff"/><path d="M.5.500h10v10h-10z" fill="#000" stroke="#bbb"/></svg><label class="dim"><input type="checkbox" checked>显示前景色和背景色(F)</label><i class="mark m2"></i></div>
      <div class="prow"><svg><use href="#brush"/></svg><label><input type="checkbox">显示活动笔刷、图案和渐变(B)</label></div>
      <div class="prow"><svg><use href="#actimg"/></svg><label><input type="checkbox">显示活动图像(I)</label></div>
      <h4 class="h2nd">工具配置</h4>
      <div class="tlist">
        <ul>
          <li class="on"><button aria-label="可见"><svg><use href="#eye"/></svg></button><span><svg><use href="#text"/></svg></span>文字</li>
          <li><button aria-label="可见"><svg><use href="#eye"/></svg></button><span><svg><use href="#bucket"/></svg></span>油漆桶填充</li>
          <li><button aria-label="可见"><svg><use href="#eye"/></svg></button><span><svg><use href="#gradient"/></svg></span>渐变</li>
          <li><button aria-label="可见"><svg><use href="#eye"/></svg></button><span><svg><use href="#pencil"/></svg></span>铅笔</li>
          <li><button aria-label="可见"><svg><use href="#eye"/></svg></button><span><svg><use href="#brush"/></svg></span>绘画笔刷</li>
          <li><button aria-label="可见"><svg><use href="#eye"/></svg></button><span><svg><use href="#eraser"/></svg></span>橡皮</li>
          <li><button aria-label="可见"><svg><use href="#eye"/></svg></button><span><svg><use href="#airbrush"/></svg></span>喷枪</li>
          <li><button aria-label="可见"><svg><use href="#eye"/></svg></button><span><svg><use href="#ink"/></svg></span>墨水</li>
        </ul>
        <div class="sb"><i></i></div>
      </div>
      <div class="order"><button aria-label="上移"><svg><use href="#up"/></svg></button><button aria-label="下移"><svg><use href="#down"/></svg></button><button aria-label="重置"><svg><use href="#reset"/></svg></button></div>
    </div>
  </div>
  <footer><button>Help</button><span></span><button>重置(R)</button><div class="okwrap"><button>确定(O)</button><i class="mark m3"></i></div><button>取消(C)</button></footer>
</section>

<div class="wm" aria-hidden="true">
  <svg class="wmx" viewBox="0 0 90 50"><path d="M44 38c4-20 20-28 36-22-14 0-22 8-24 16z" fill="#24507c"/><path d="M42 44c14 4 28-2 34-18 2 18-16 28-34 18z" fill="#5c7f35"/><path d="M16 2h18l8 13C50 9 55 5 61 2c-8 5-14 11-17 16l12 16H40L32 23C20 29 10 36 3 43c6-9 13-17 22-24z" fill="#a9a9aa"/></svg>
  <span class="wmt">自由互联</span>
  <span class="wmu">www.xz7.com</span>
</div>
<svg class="sogou" viewBox="0 0 40 34" aria-hidden="true"><path d="M20 5h20v25H12z" fill="#fff"/><path d="M4 5l23-4c2 0 3 1 3 2l3 21c0 2-1 3-2 3L8 31c-2 0-3-1-3-2L1 8c0-2 1-3 3-3z" fill="#f0602c"/><path d="M26 8C19 5 9 8 11 13s14 1 14 7c-1 5-10 6-16 3" fill="none" stroke="#fff" stroke-width="4.500"/><path d="M38 12h2M38 19h2M38 25h2" stroke="#3aa0e8" stroke-width="2"/></svg>
</body>
</html>
```

FILE: styles.css
```css
*{box-sizing:border-box}
html,body{height:100%}
body{margin:0;display:flex;flex-direction:column;overflow:hidden;position:relative;background:#454545;color:#dcdcdc;font:12px/16px "Noto Sans","Noto Sans CJK SC",sans-serif}
button,input,select{font:inherit;color:inherit;border:0;margin:0;padding:0;background:none;border-radius:0;appearance:none;outline:0;min-width:0}
button{display:flex;align-items:center;justify-content:center}
h1,h2,h3,h4,ul{margin:0;padding:0;font-size:inherit;list-style:none}
svg{display:block;flex:none;fill:currentColor}
svg .s,.s{fill:none;stroke:currentColor}
i{display:block;font-style:normal}
.defs{position:absolute;width:0;height:0}

.titlebar{height:31px;flex:none;background:#fff;border-top:1px solid #8a8a8a;color:#8f8f8f;display:flex;align-items:center;padding-left:12px}
.titlebar h1{font:400 13px/18px Roboto,"Noto Sans CJK SC",sans-serif;margin-left:3px;flex:1;white-space:nowrap}
.wil{width:16px;height:13px;color:#a9adb0}
.winbtns{display:flex}
.winbtns button{width:46px;height:28px;color:#777}
.winbtns svg{width:12px;height:12px}
.menubar{height:27px;flex:none;display:flex;align-items:center;gap:13px;padding-left:8px;color:#eee}

.work{flex:1;min-height:0;display:grid;grid-template-columns:188px 4px minmax(0,1fr) 4px 204px;border-bottom:3px solid #566149}
.left,.right,.center{display:flex;flex-direction:column;min-height:0;min-width:0}
.gutter{border:solid #5e5e5e;border-width:0 1px;background:#3c3c3c;display:flex;align-items:center;justify-content:center}
.gutter i{width:2px;height:18px;background:repeating-linear-gradient(#bbb 0 4px,transparent 4px 7px)}

.band{width:176px;height:19px;margin:0 0 2px 3px;fill:#525252}
.tools{display:grid;grid-template-columns:repeat(7,26px);grid-auto-rows:24px;padding-left:1px;color:#bdbdbd}
.tools svg{width:16px;height:16px}
.tools .on{background:#1e1e1e;border-radius:3px;color:#ddd}
.swatches{height:50px;padding:5px 0 0 68px}
.dtabs{height:22px;flex:none;display:flex;border-bottom:1px solid #5e5e5e;padding-left:2px;color:#bdbdbd}
.dtabs button{width:19px;background:#232323}
.dtabs .on{background:none;border:solid #5e5e5e;border-width:1px 1px 0 0}
.dtabs svg{width:14px;height:14px}
.dtabs button.coll{width:14px;margin-left:auto;background:none;margin-right:2px}
.dtabs .coll svg{width:10px;height:10px}
.whitebox{width:14px;height:14px;background:#f8faff}
.opts{flex:1;padding:0 3px 0 4px;display:flex;flex-direction:column}
.opts h2{height:12px;line-height:14px;font-weight:700;color:#eee}
.fontrow{display:flex;gap:2px}
.aa{width:36px;height:36px;background:#2b2b2b;border:1px solid #171717;border-radius:3px}
.aa span{width:26px;height:26px;background:#fff;color:#111;font:18px/26px "Noto Sans",sans-serif;text-align:center}
.fontcol{flex:1;display:flex;flex-direction:column}
.fontcol label{height:15px;line-height:13px}
.opts input:not([type]){background:#1e1e1e;height:20px;padding:0 3px;width:100%}
.row{display:flex;align-items:center}
.row>label,.row>.lab{width:50px;white-space:nowrap}
.spin{display:flex;flex:1;min-width:0}
.arrows{width:13px;flex:none;background:#191919;display:grid;grid-template-rows:1fr 1fr;justify-items:center;align-items:center}
.arrows button{width:8px;height:5px;background:#ccc;clip-path:polygon(50% 0,100% 100%,0 100%)}
.arrows button+button{clip-path:polygon(0 0,100% 0,50% 100%)}
.sizerow{height:34px;gap:2px}
.row.sizerow>label{width:36px}
.sel{display:grid;align-items:center;height:26px;background:#2b2b2b;border:1px solid #171717;border-radius:3px;width:45px}
.sel select,.sel svg{grid-area:1/1}
.sel select{padding-left:5px;width:100%;height:100%}
.sel svg{width:12px;height:12px;justify-self:end;margin-right:6px;pointer-events:none}
.w92{width:92px}.w57{width:57px}
.w92 select,.w57 select{padding-left:10px}
.chk{display:flex;align-items:center;height:21px;gap:7px;padding-left:2px}
.chk+.chk{height:20px}
input[type=checkbox]{width:13px;height:13px;background:#1c1c1c;border-radius:3px;flex:none;display:grid;place-items:center}
input[type=checkbox]:checked::before{content:"";width:7px;height:7px;background:#fff;clip-path:polygon(0 20%,20% 0,50% 30%,80% 0,100% 20%,70% 50%,100% 80%,80% 100%,50% 70%,20% 100%,0 80%,30% 50%)}
.dim{color:#919191}
.hintrow{height:30px;padding-top:1px}
.colrow{height:35px}
.colorbtn{width:92px;height:34px;background:#2b2b2b;border:1px solid #171717;border-radius:3px}
.colorbtn i{width:82px;height:24px;background:#fbf1f1}
.alrow{height:26px;color:#ccc}
.alrow button{width:23px;height:23px}
.alrow .on{background:#1e1e1e;border-radius:3px}
.alrow svg{width:14px;height:12px}
.sprow{height:23px;padding-left:29px;gap:3px;color:#c4c4c4}
.sprow svg{width:18px;height:18px}
.sprow .spin{flex:none;width:50px}
.boxrow{height:27px}
.langlab{height:17px;line-height:17px}
.foot{height:24px;flex:none;margin:0 3px 0 4px;background:#3c3c3c;display:grid;grid-auto-flow:column;grid-auto-columns:1fr;color:#bdbdbd}
.foot svg{width:13px;height:13px}

.imgtabs{height:46px;flex:none;display:flex;align-items:flex-start;padding-top:2px;border-bottom:1px solid #5e5e5e}
.it{height:43px;width:56px;background:#1e1e1e;padding:4px}
.it i{width:48px;height:36px;background:#f8faff}
.it .blue{background:#536592}
.it.on{width:83px;background:none;border:1px solid #5e5e5e;border-bottom:0;display:flex;gap:7px;align-items:center}
.it svg{width:12px;height:12px;color:#bbb}
.view{flex:1;min-height:0;display:grid;grid-template-columns:16px minmax(0,1fr) 16px;grid-template-rows:15px minmax(0,1fr) 18px;padding:3px 2px 0 2px}
.corner svg{width:12px;height:12px;color:#bdbdbd}
.qm::before{content:"";width:12px;height:12px;background:#777;border:1px solid #999}
.nav svg{height:14px;width:14px}
.hr{width:100%;height:16px;overflow:hidden}
.vr{width:16px;height:100%;overflow:hidden}
.hr text,.vr text{font-size:10px;fill:#ddd}
.canvas{position:relative;overflow:hidden}
.sheet{position:absolute;left:200px;top:72px;width:800px;height:600px}
.vbar,.hbar{background:#5a5a5a;border:1px solid #1c1c1c;border-radius:2px}
.vbar{margin:3px 1px 0}
.hbar{margin:2px 0 1px 2px}
.status{height:33px;flex:none;display:flex;align-items:center;padding-left:82px}
.status .unit{width:49px;height:30px;font-size:11px}
.status .unit select{padding-left:6px}
.zoomv{width:34px;height:26px;background:#383838;margin-left:1px;padding-left:1px;font-size:11px}
.zoomb{width:22px;height:30px;background:#2b2b2b;border:1px solid #171717;border-radius:3px}
.zoomb svg{width:12px;height:12px}
.status>span:last-child{margin-left:2px}

.right{background:#3a3a3a;padding-right:4px}
.right>.dtabs{margin-top:2px;padding-left:0}
.right>.dtabs button{width:21px}
.right>.dtabs button.coll{width:14px;margin-right:0}
.miniaa{width:14px;height:14px;background:#fff;color:#111;font-size:9px;line-height:14px}
.glow{width:14px;height:10px;background:radial-gradient(#cdb98c,#111 80%)}
.brushed{padding:2px 0 0 4px;border-bottom:1px solid #5e5e5e}
.bname{width:100%;height:20px;background:#1e1e1e;padding-left:3px;display:block}
.preview{width:100%;height:auto}
.shape{display:flex;align-items:center;height:26px;color:#999}
.shape span{width:37px}
.shape button{width:23px;height:23px}
.shape .on{background:#232323;border:1px solid #171717;border-radius:3px}
.shape svg{width:12px;height:12px}
.slider{display:flex;height:28px;margin:2px 0 4px}
.slider>div{flex:1;display:flex;justify-content:space-between;align-items:center;padding:0 2px;background:#373737;border-right:1px solid #333}
.slider b{font-weight:400}
.slider>div span{line-height:22px;align-self:flex-start}
.slider.off{color:#444}
.slider.k3>div{background:linear-gradient(90deg,#555 3px,#000 3px 4px,#373737 4px)}
.slider.k6>div{background:linear-gradient(90deg,#555 6px,#000 6px 7px,#373737 7px)}
.slider.full{color:#e4e4e4}
.slider.full>div{background:#555;border-right:1px solid #000}
.ud{width:12px;display:grid;justify-items:center;color:#777}
.ud svg{width:8px;height:8px}
.ud .lit{color:#ccc}
.hsplit{height:4px;display:flex;justify-content:center;align-items:center;flex:none}
.hsplit i{width:18px;height:2px;background:repeating-linear-gradient(90deg,#bbb 0 4px,transparent 4px 7px)}
.right>.lt{margin-top:0;height:21px}
.right>.lt button{width:45px;gap:2px;white-space:nowrap}
.layers{flex:1;padding:2px 0 0 4px;background:linear-gradient(#3a3a3a 116px,#323232 116px)}
.moderow{display:flex;gap:3px}
.mode{flex:1;height:26px;background:#2b2b2b;border:1px solid #171717;border-radius:3px;display:flex;align-items:center;justify-content:space-between;padding-left:6px}
.bare{border:0;background:none;height:24px;width:50px}
.bare select{padding:0}
.mode2{width:42px;background:#2b2b2b;border:1px solid #171717;border-radius:3px;gap:6px}
.mode2 svg{width:12px;height:12px}
.opac{margin:2px 0 0;height:30px;border:1px solid #858585}
.lock{display:flex;align-items:center;height:24px;color:#bbb}
.lock span{width:37px}
.lock button{width:24px}
.lock svg{width:12px;height:12px}
.layer{display:flex;align-items:center;height:33px;background:#1e1e1e;color:#ddd}
.layer svg{width:20px;height:16px}
.layer button{width:30px}
.layer i{width:36px;height:28px;background:#f8faff;margin:0 5px 0 45px}

.dialog{position:absolute;left:272px;top:91px;width:765px;background:#454545;border:1px solid #2e2e2e;font-size:14px;line-height:20px;color:#cfcfcf}
.dialog>header{height:30px;background:#fff;color:#111;display:flex;align-items:center;padding-left:8px;font-size:12px}
.dialog header h2{font-weight:400;flex:1;margin-left:5px}
.dialog header button{width:31px;height:30px}
.dialog header svg:not(.wil){width:12px;height:12px}
.dbody{display:flex;gap:13px;padding:12px}
.tree{display:flex;height:486px;width:178px;flex:none}
.tree ul{flex:1;background:#303030;overflow:hidden;min-width:0}
.tree li{height:24px;display:flex;align-items:center;gap:4px;padding-left:20px;position:relative;white-space:nowrap}
.tree li svg{width:20px;height:20px;color:#bdbdbd}
.tree .sub{padding-left:37px}
.tree .open{padding-left:3px}
.tree .open button{width:12px;height:12px;background:#1c1c1c;border-radius:3px;margin-right:1px}
.tree .open button::before{content:"";width:7px;height:3px;background:#fff}
.tree .on,.tlist .on{background:#1e1e1e;color:#e8e8e8}
.sb{width:14px;flex:none;background:#1e1e1e;padding:1px}
.sb i{height:464px;background:#5a5a5a;border-radius:2px}
.page{flex:1;min-width:0}
.banner{height:60px;background:#555;display:flex;align-items:center;justify-content:space-between;padding:0 6px}
.banner h3{font-size:17px;color:#eee}
.banner svg{width:48px;height:48px;color:#bdbdbd}
.page h4{height:24px;padding-top:8px;color:#eee}
.page .h2nd{height:24px;padding-top:4px}
.prow{height:30px;display:flex;align-items:center;padding-left:18px;gap:10px;position:relative}
.prow svg{width:20px;height:20px;color:#bdbdbd}
.prow label{display:flex;align-items:center;gap:4px}
.tlist{display:flex;height:236px;margin-left:17px}
.tlist ul{flex:1;background:#303030;overflow:hidden}
.tlist li{height:30px;display:flex;align-items:center;padding-left:6px;gap:4px}
.tlist li button svg{width:20px;height:16px;color:#bdbdbd}
.tlist li span{width:26px;height:26px;border:1px solid #000;display:grid;place-items:center;color:#c4c4c4;margin-left:4px}
.tlist li span svg{width:24px;height:24px}
.tlist .sb{padding-top:124px}
.tlist .sb i{height:39px}
.order{height:22px;margin-left:17px;display:grid;grid-template-columns:repeat(3,1fr)}
.order svg{width:13px;height:13px;color:#bdbdbd}
.dialog>footer{display:flex;gap:6px;padding:11px 12px 12px}
.dialog>footer>span{flex:1}
.dialog>footer button{width:85px;height:28px;background:#2b2b2b;border:1px solid #171717;border-radius:3px;font-size:13px}
.okwrap{position:relative}
.mark{position:absolute;border:3px solid #e01010;box-shadow:1px 2px 4px rgba(0,0,0,.7),inset 1px 2px 4px rgba(0,0,0,.5);pointer-events:none}
.m1{left:20px;top:-6px;width:119px;height:34px;z-index:1}
.m2{left:36px;top:-5px;width:194px;height:36px}
.m3{inset:-18px -7px -9px -14px;z-index:1}

.wm{position:absolute;right:0;bottom:0;width:200px;height:60px;pointer-events:none}
.wmx{position:absolute;left:0;top:2px;width:90px;height:50px}
.wmt{position:absolute;left:66px;top:4px;font:italic 700 29px/32px "Noto Sans CJK SC",sans-serif;color:#9aa3b1;-webkit-text-stroke:1px #9aa3b1;white-space:nowrap}
.wmu{position:absolute;left:85px;top:35px;font:16px/20px "Liberation Sans",sans-serif;color:#1f7f3f;opacity:.85}
.sogou{position:absolute;right:0;top:841px;width:40px;height:34px}
```
